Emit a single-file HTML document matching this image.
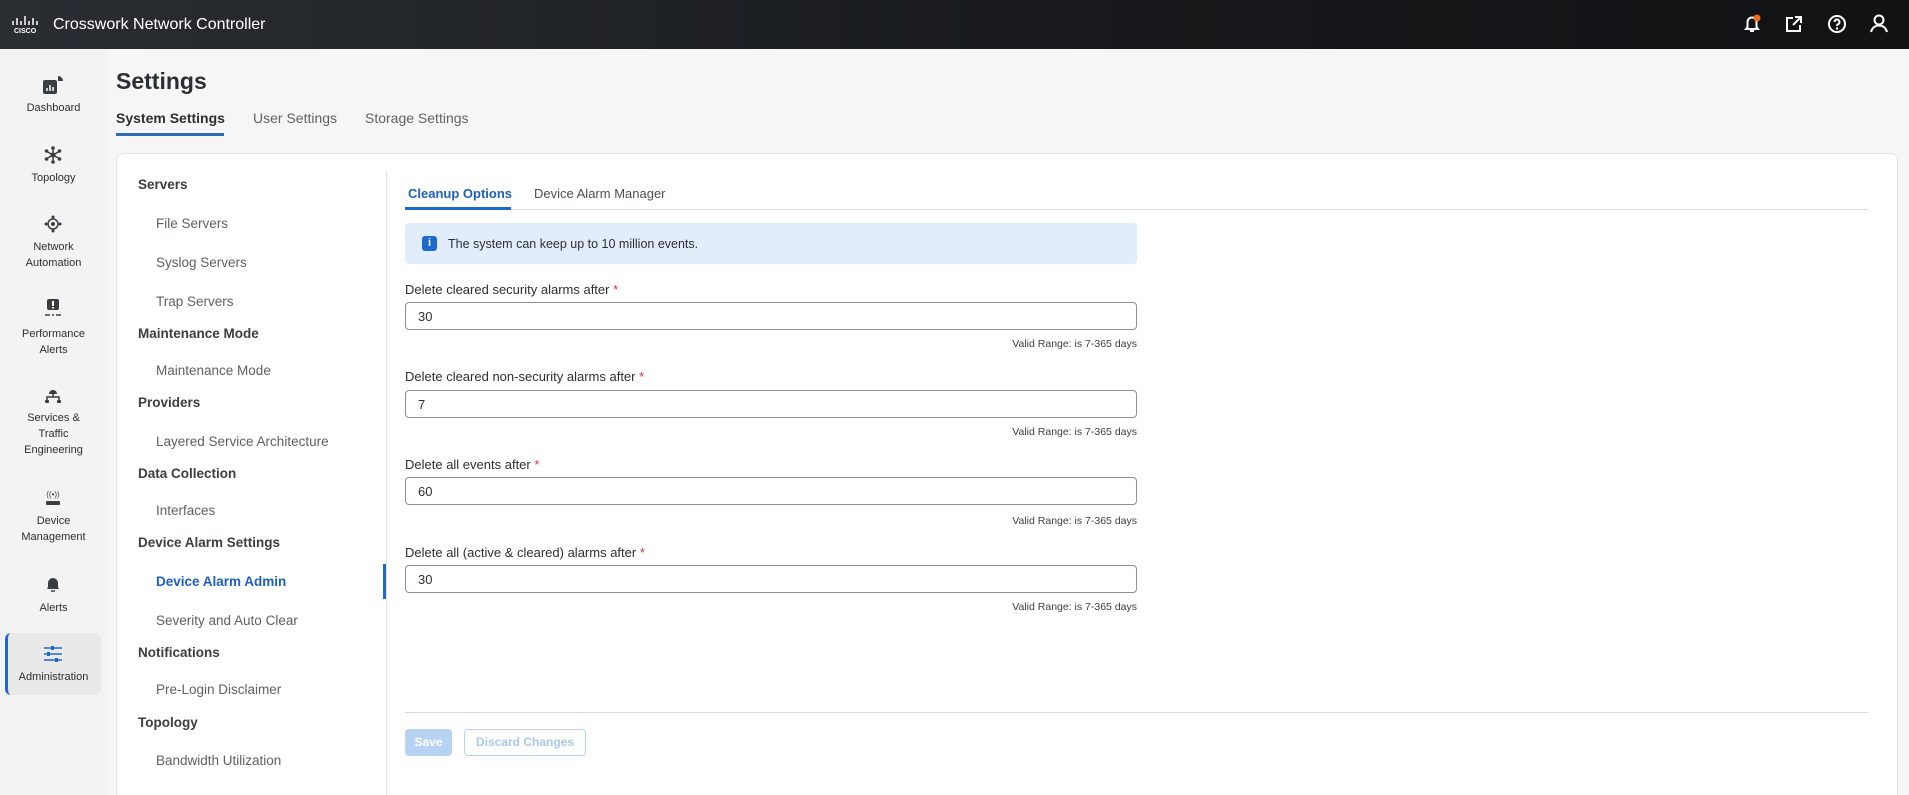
<!DOCTYPE html>
<html style="width:1909px;height:795px;overflow:hidden"><head><meta charset="utf-8"><style>
*{box-sizing:border-box;margin:0;padding:0}
body{width:1909px;height:795px;overflow:hidden;background:#f6f6f6;font-family:"Liberation Sans",sans-serif;color:#2b2f33;position:relative}
.hdr{position:absolute;left:0;top:0;width:1909px;height:49px;background:linear-gradient(90deg,#2a2e33,#16181b 60%,#111214)}
.hdr .t{position:absolute;left:53px;top:16px;color:#fff;font-size:16px}
.side{position:absolute;left:0;top:49px;width:107px;height:746px;background:#f3f3f3}
.ni{position:absolute;left:0;width:107px;text-align:center;font-size:11px;color:#2b2f33;line-height:16px}
.abs{position:absolute}
.title{left:116px;top:68px;font-size:23px;font-weight:bold;color:#2b2f33}
.tab{top:110px;font-size:14px;color:#5f6368}
.card{left:116px;top:153px;width:1782px;height:642px;background:#fff;border:1px solid #e4e4e4;border-bottom:none;border-radius:8px 8px 0 0}
.mh{left:138px;font-size:13.5px;font-weight:bold;color:#3a3e42}
.mi{left:156px;font-size:13.5px;color:#5b6166}
.lbl{left:405px;font-size:13px;color:#2b2f33}
.lbl b{color:#d33;font-weight:normal}
.inp{left:405px;width:732px;height:28px;border:1px solid #8a8f94;border-radius:4px;font-size:13px;padding:6px 12px}
.vr{left:905px;width:232px;text-align:right;font-size:10.5px;color:#3a3e42}
</style></head><body>
<div class="hdr">
 <svg class="abs" style="left:11px;top:16px" width="32" height="18" viewBox="0 0 32 18"><g stroke="#fff" stroke-width="1.5"><line x1="2" y1="5" x2="2" y2="9"/><line x1="6" y1="2" x2="6" y2="9"/><line x1="10" y1="5" x2="10" y2="9"/><line x1="14" y1="0" x2="14" y2="9"/><line x1="18" y1="5" x2="18" y2="9"/><line x1="22" y1="2" x2="22" y2="9"/><line x1="26" y1="5" x2="26" y2="9"/></g><text x="3" y="17" fill="#fff" font-size="7" font-weight="bold" font-family="Liberation Sans">CISCO</text></svg>
 <div class="t">Crosswork Network Controller</div>
 <svg class="abs" style="left:1741px;top:13px" width="22" height="22" viewBox="0 0 22 22"><path d="M5 16h12l-1.5-2V9a4.5 4.5 0 0 0-9 0v5z M9 18h4" fill="none" stroke="#fff" stroke-width="2"/><circle cx="16" cy="5" r="3.5" fill="#f26b1d"/></svg>
 <svg class="abs" style="left:1783px;top:13px" width="22" height="22" viewBox="0 0 22 22"><path d="M10 5H4v13h13v-6 M12 4h6v6 M18 4l-8 8" fill="none" stroke="#fff" stroke-width="2"/></svg>
 <svg class="abs" style="left:1826px;top:13px" width="22" height="22" viewBox="0 0 22 22"><circle cx="11" cy="11" r="8" fill="none" stroke="#fff" stroke-width="2"/><path d="M8.5 9a2.5 2.5 0 1 1 3.5 2.3c-.8.4-1 .9-1 1.7" fill="none" stroke="#fff" stroke-width="2"/><circle cx="11" cy="15.5" r="1.2" fill="#fff"/></svg>
 <svg class="abs" style="left:1868px;top:12px" width="22" height="22" viewBox="0 0 22 22"><circle cx="11" cy="8" r="4.5" fill="none" stroke="#fff" stroke-width="2"/><path d="M3 20c1-4 4-6.5 8-6.5s7 2.5 8 6.5" fill="none" stroke="#fff" stroke-width="2"/></svg>
</div>
<div class="side">
 <svg class="abs" style="left:43px;top:27px" width="20" height="18" viewBox="0 0 20 18"><rect x="0" y="4" width="14" height="14" rx="2" fill="#3a3e42"/><path d="M15 0a5 5 0 0 1 5 5h-5z" fill="#3a3e42"/><g stroke="#fff" stroke-width="1.5"><line x1="4" y1="15" x2="4" y2="12"/><line x1="7" y1="15" x2="7" y2="9"/><line x1="10" y1="15" x2="10" y2="11"/></g></svg>
 <div class="ni" style="top:51px">Dashboard</div>
 <svg class="abs" style="left:44px;top:97px" width="18" height="18" viewBox="0 0 18 18"><g stroke="#3a3e42" stroke-width="1.5"><line x1="9" y1="1" x2="9" y2="17"/><line x1="2" y1="5" x2="16" y2="13"/><line x1="2" y1="13" x2="16" y2="5"/></g><g fill="#3a3e42"><circle cx="9" cy="9" r="2.5"/><circle cx="9" cy="2" r="1.8"/><circle cx="9" cy="16" r="1.8"/><circle cx="2.5" cy="5" r="1.8"/><circle cx="15.5" cy="5" r="1.8"/><circle cx="2.5" cy="13" r="1.8"/><circle cx="15.5" cy="13" r="1.8"/></g></svg>
 <div class="ni" style="top:121px">Topology</div>
 <svg class="abs" style="left:44px;top:166px" width="18" height="18" viewBox="0 0 18 18"><circle cx="9" cy="9" r="5" fill="none" stroke="#3a3e42" stroke-width="1.5"/><circle cx="9" cy="9" r="2" fill="#3a3e42"/><g fill="#3a3e42"><circle cx="9" cy="2" r="1.5"/><circle cx="9" cy="16" r="1.5"/><circle cx="2" cy="9" r="1.5"/><circle cx="16" cy="9" r="1.5"/></g></svg>
 <div class="ni" style="top:190px">Network<br>Automation</div>
 <svg class="abs" style="left:44px;top:250px" width="18" height="18" viewBox="0 0 18 18"><rect x="3" y="0" width="12" height="11" rx="2" fill="#3a3e42"/><rect x="8" y="2" width="2" height="5" fill="#fff"/><rect x="8" y="8" width="2" height="1.5" fill="#fff"/><g stroke="#3a3e42" stroke-width="1.5"><line x1="1" y1="16" x2="6" y2="16"/><line x1="8" y1="16" x2="10" y2="16"/><line x1="12" y1="16" x2="17" y2="16"/></g></svg>
 <div class="ni" style="top:277px">Performance<br>Alerts</div>
 <svg class="abs" style="left:44px;top:338px" width="18" height="18" viewBox="0 0 18 18"><path d="M5 7a4 4 0 0 1 8 0z" fill="#3a3e42"/><g stroke="#3a3e42" stroke-width="1.5" fill="none"><path d="M9 7v3M3 13v-3h12v3"/></g><rect x="1" y="13" width="4" height="3" rx="1" fill="#3a3e42"/><rect x="13" y="13" width="4" height="3" rx="1" fill="#3a3e42"/></svg>
 <div class="ni" style="top:361px">Services &amp;<br>Traffic<br>Engineering</div>
 <svg class="abs" style="left:43px;top:440px" width="20" height="18" viewBox="0 0 20 18"><text x="10" y="8" text-anchor="middle" font-size="8" fill="#3a3e42" font-family="Liberation Sans">((•))</text><rect x="3" y="12" width="14" height="4" rx="1" fill="#3a3e42"/></svg>
 <div class="ni" style="top:464px">Device<br>Management</div>
 <svg class="abs" style="left:45px;top:526px" width="16" height="18" viewBox="0 0 16 18"><path d="M2 14h12l-1-2V8a5 5 0 0 0-10 0v4z" fill="#3a3e42"/><path d="M6 16h4" stroke="#3a3e42" stroke-width="1.5"/></svg>
 <div class="ni" style="top:551px">Alerts</div>
 <div class="abs" style="left:5px;top:584px;width:96px;height:62px;background:#e9e9e9;border-radius:6px;border-left:3px solid #1d69cc"></div>
 <svg class="abs" style="left:43px;top:597px" width="20" height="16" viewBox="0 0 20 16"><g stroke="#1d69cc" stroke-width="1.6"><line x1="1" y1="2" x2="19" y2="2"/><line x1="1" y1="8" x2="19" y2="8"/><line x1="1" y1="14" x2="19" y2="14"/></g><g fill="#1d69cc"><rect x="8" y="0" width="3" height="4"/><rect x="4" y="6" width="3" height="4"/><rect x="12" y="12" width="3" height="4"/></g></svg>
 <div class="ni" style="top:620px">Administration</div>
</div>
<div class="abs title">Settings</div>
<div class="abs tab" style="left:116px;color:#2b2f33;font-weight:bold">System Settings</div>
<div class="abs" style="left:116px;top:133px;width:108px;height:3px;background:#2f6db5"></div>
<div class="abs tab" style="left:253px">User Settings</div>
<div class="abs tab" style="left:365px">Storage Settings</div>
<div class="abs card"></div>
<div class="abs" style="left:386px;top:170px;width:1px;height:625px;background:#e4e4e4"></div>
<div class="abs" style="left:383px;top:564px;width:3px;height:35px;background:#1d69cc"></div>
<div class="abs mh" style="top:177px">Servers</div>
<div class="abs mi" style="top:216px">File Servers</div>
<div class="abs mi" style="top:255px">Syslog Servers</div>
<div class="abs mi" style="top:294px">Trap Servers</div>
<div class="abs mh" style="top:326px">Maintenance Mode</div>
<div class="abs mi" style="top:363px">Maintenance Mode</div>
<div class="abs mh" style="top:395px">Providers</div>
<div class="abs mi" style="top:434px">Layered Service Architecture</div>
<div class="abs mh" style="top:466px">Data Collection</div>
<div class="abs mi" style="top:503px">Interfaces</div>
<div class="abs mh" style="top:535px">Device Alarm Settings</div>
<div class="abs mi" style="top:574px;color:#1d5fbf;font-weight:bold">Device Alarm Admin</div>
<div class="abs mi" style="top:613px">Severity and Auto Clear</div>
<div class="abs mh" style="top:645px">Notifications</div>
<div class="abs mi" style="top:682px">Pre-Login Disclaimer</div>
<div class="abs mh" style="top:715px">Topology</div>
<div class="abs mi" style="top:753px">Bandwidth Utilization</div>

<div class="abs" style="left:408px;top:186px;font-size:13px;font-weight:bold;color:#1d5fbf">Cleanup Options</div>
<div class="abs" style="left:534px;top:186px;font-size:13px;color:#4b5055">Device Alarm Manager</div>
<div class="abs" style="left:405px;top:209px;width:1463px;height:1px;background:#dcdcdc"></div>
<div class="abs" style="left:405px;top:207px;width:106px;height:3px;background:#1d69cc"></div>
<div class="abs" style="left:405px;top:223px;width:732px;height:41px;background:#e2edfb;border-radius:4px"></div>
<div class="abs" style="left:422px;top:236px;width:15px;height:15px;background:#1d69cc;border-radius:3px;color:#fff;font-size:11px;font-weight:bold;text-align:center;line-height:15px">i</div>
<div class="abs" style="left:448px;top:237px;font-size:12.5px;color:#2b2f33">The system can keep up to 10 million events.</div>

<div class="abs lbl" style="top:282px">Delete cleared security alarms after <b>*</b></div>
<div class="abs inp" style="top:302px">30</div>
<div class="abs vr" style="top:338px">Valid Range: is 7-365 days</div>
<div class="abs lbl" style="top:369px">Delete cleared non-security alarms after <b>*</b></div>
<div class="abs inp" style="top:390px">7</div>
<div class="abs vr" style="top:426px">Valid Range: is 7-365 days</div>
<div class="abs lbl" style="top:457px">Delete all events after <b>*</b></div>
<div class="abs inp" style="top:477px">60</div>
<div class="abs vr" style="top:515px">Valid Range: is 7-365 days</div>
<div class="abs lbl" style="top:545px">Delete all (active &amp; cleared) alarms after <b>*</b></div>
<div class="abs inp" style="top:565px">30</div>
<div class="abs vr" style="top:601px">Valid Range: is 7-365 days</div>

<div class="abs" style="left:405px;top:712px;width:1463px;height:1px;background:#dcdcdc"></div>
<div class="abs" style="left:405px;top:729px;width:47px;height:27px;background:#b7d3f4;border-radius:4px;color:#fff;font-size:12px;font-weight:bold;text-align:center;line-height:27px">Save</div>
<div class="abs" style="left:464px;top:729px;width:122px;height:27px;border:1px solid #b7d3f4;border-radius:4px;color:#a9c8ee;font-size:12px;font-weight:bold;text-align:center;line-height:25px">Discard Changes</div>
</body></html>
